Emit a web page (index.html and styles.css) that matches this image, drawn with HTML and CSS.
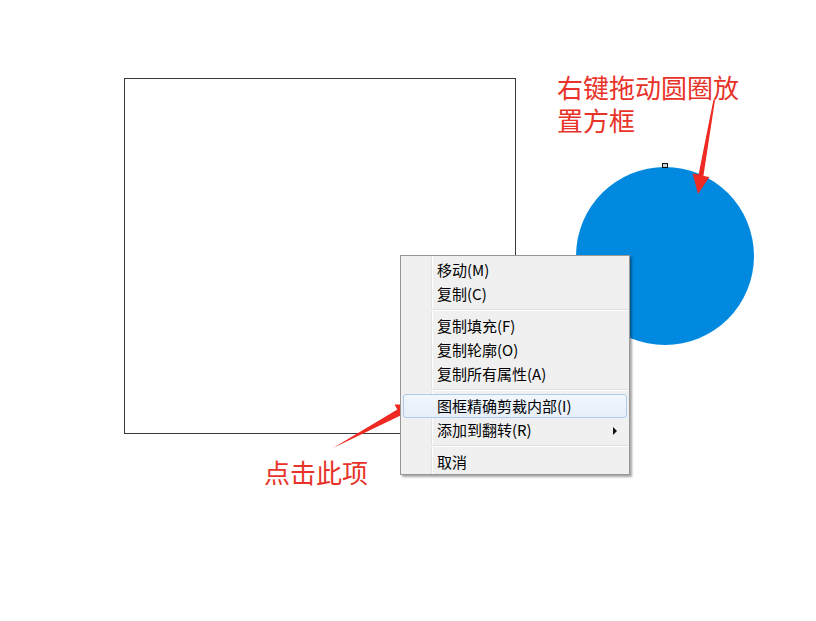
FILE: index.html
```html
<!DOCTYPE html>
<html lang="zh">
<head>
<meta charset="utf-8">
<link rel="stylesheet" href="styles.css">
</head>
<body>
<div class="canvas">
  <div class="frame"></div>
  <div class="circle"></div>
  <div class="handle"></div>
  <div class="note note-top">
    <div class="note-line">右键拖动圆圈放</div>
    <div class="note-line">置方框</div>
  </div>
  <div class="note note-bottom">点击此项</div>
  <svg class="arrows" width="816" height="621" viewBox="0 0 816 621">
    <polygon fill="#ee2a22" points="715,100 713.4,100 698.6,174.5 692.6,173.6 698,194 709.4,177.1 703.4,175.9"/>
    <polygon fill="#ee2a22" points="333,448 397.3,409.5 394.5,404.5 413,404.5 403,419.5 400.6,415.6"/>
  </svg>
  <div class="menu">
    <div class="item">移动(M)</div>
    <div class="item">复制(C)</div>
    <div class="sep"></div>
    <div class="item">复制填充(F)</div>
    <div class="item">复制轮廓(O)</div>
    <div class="item">复制所有属性(A)</div>
    <div class="sep"></div>
    <div class="item hover">图框精确剪裁内部(I)</div>
    <div class="item sub">添加到翻转(R)<span class="tri"></span></div>
    <div class="sep"></div>
    <div class="item">取消</div>
  </div>
</div>
</body>
</html>
```
FILE: styles.css
```css
html, body {
  margin: 0;
  padding: 0;
  background: #ffffff;
}
.canvas {
  position: relative;
  width: 816px;
  height: 621px;
  overflow: hidden;
  font-family: "Noto Sans CJK SC", "Noto Sans", sans-serif;
}
.frame {
  position: absolute;
  left: 124px;
  top: 78px;
  width: 390px;
  height: 354px;
  border: 1px solid #3a3a3a;
}
.circle {
  position: absolute;
  left: 576px;
  top: 167px;
  width: 178px;
  height: 178px;
  border-radius: 50%;
  background: #0089df;
}
.handle {
  position: absolute;
  left: 662px;
  top: 163px;
  width: 4px;
  height: 3px;
  border: 1px solid #111;
  background: #c8d4dc;
}
.note {
  position: absolute;
  color: #e8332a;
  font-size: 26px;
  line-height: 33px;
  white-space: nowrap;
}
.note-line {
  height: 33px;
}
.note-top {
  left: 557px;
  top: 70px;
}
.note-bottom {
  left: 264px;
  top: 455px;
}
.arrows {
  position: absolute;
  left: 0;
  top: 0;
}
.menu {
  position: absolute;
  left: 400px;
  top: 255px;
  width: 228px;
  padding: 2px 0 0 0;
  border: 1px solid #979797;
  background: linear-gradient(to right, #f0f0f0 0, #f0f0f0 30px, #e2e3e3 30px, #e2e3e3 31px, #ffffff 31px, #ffffff 32px, #f0f0f0 32px);
  box-shadow: 2px 2px 2px rgba(0, 0, 0, 0.35);
  display: flex;
  flex-direction: column;
}
.item {
  position: relative;
  height: 24px;
  line-height: 24px;
  padding-left: 33px;
  padding-right: 2px;
  font-size: 15px;
  color: #000;
  margin: 0 2px;
  box-sizing: border-box;
  border: 1px solid transparent;
  border-radius: 3px;
  display: flex;
  align-items: center;
}
.hover {
  border-color: #aeccef;
  background: linear-gradient(to bottom, #f2f7fd, #e6eef9);
}
.tri {
  position: absolute;
  right: 9px;
  top: 8px;
  width: 0;
  height: 0;
  border-left: 4px solid #111;
  border-top: 4px solid transparent;
  border-bottom: 4px solid transparent;
}
.sep {
  height: 8px;
  margin-left: 30px;
  display: flex;
  flex-direction: column;
  justify-content: center;
}
.sep::before {
  content: "";
  display: block;
  height: 1px;
  background: #e0e0e0;
  border-bottom: 1px solid #ffffff;
}
```
